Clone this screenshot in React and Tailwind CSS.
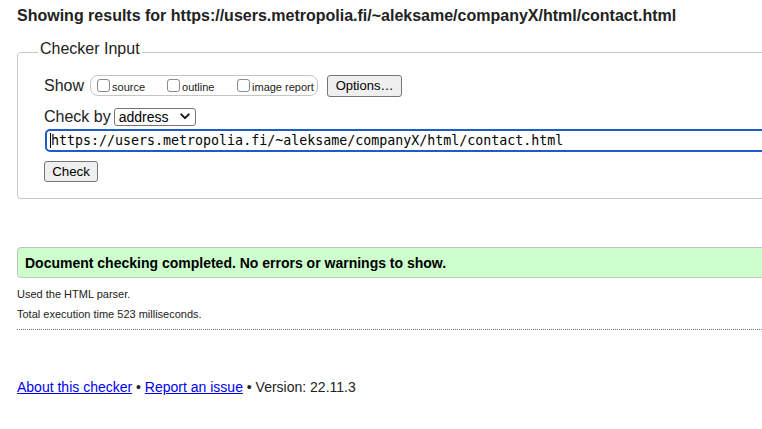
import React from 'react';

const Checkbox = ({ label }) => (
  <label className="flex items-center">
    <span className="inline-block w-[13px] h-[13px] border border-[#8a8a8a] rounded-[3px] bg-white mr-[2px]" />
    <span className="text-[11px] leading-[13px] mt-[3px]">{label}</span>
  </label>
);

const App = () => {
  return (
    <div className="w-[762px] h-[429px] overflow-hidden bg-white text-[#222] font-['Liberation_Sans',Arial,sans-serif]">
      <div className="w-[800px] pl-[17px]">
        <h2 className="pt-[7px] text-[16px] leading-[18px] font-bold text-[#222]">
          Showing results for https://users.metropolia.fi/~aleksame/companyX/html/contact.html
        </h2>

        <fieldset className="mt-[15px] border border-[#c6c6c6] rounded-[4px] pl-[20px] pb-[15px]">
          <legend className="px-[2px] pb-[6px] text-[16px] leading-[18px] text-[#222]">Checker Input</legend>

          <div className="pl-[6px]">
            <div className="mt-[10px] flex items-center h-[23px]">
              <span className="text-[16px] leading-[18px]">Show</span>
              <div className="ml-[6px] flex items-center h-[21px] w-[228px] border border-[#c4c4c4] rounded-[8px] pl-[6px]">
                <div className="w-[70px]"><Checkbox label="source" /></div>
                <div className="w-[70px]"><Checkbox label="outline" /></div>
                <div><Checkbox label="image report" /></div>
              </div>
              <button className="ml-[9px] h-[22px] w-[75px] bg-[#efefef] border border-[#767676] rounded-[3px] text-[13px] leading-[15px] text-black">
                Options…
              </button>
            </div>

            <div className="mt-[10px] flex items-center h-[19px]">
              <span className="text-[16px] leading-[18px]">Check by</span>
              <div className="ml-[3px] flex items-center justify-between w-[82px] h-[18px] border border-[#767676] rounded-[3px] bg-white pl-[4px] pr-[5px]">
                <span className="text-[14px] leading-[16px] text-black">address</span>
                <svg width="10" height="7" viewBox="0 0 10 7" fill="none">
                  <path d="M1.2 1.3 L5 5.2 L8.8 1.3" stroke="#111" strokeWidth="1.8" strokeLinecap="round" strokeLinejoin="round" />
                </svg>
              </div>
            </div>

            <div className="mt-[3px] ml-[1px] flex items-center h-[23px] border-2 border-[#1a5dc8] rounded-[5px] pl-[3px] bg-white">
              <span className="inline-block w-px h-[15px] bg-black" />
              <span className="font-['DejaVu_Sans_Mono',Menlo,monospace] text-[13.3px] leading-[16px] text-black">
                https://users.metropolia.fi/~aleksame/companyX/html/contact.html
              </span>
            </div>

            <button className="mt-[9px] h-[21px] w-[54px] bg-[#efefef] border border-[#767676] rounded-[3px] text-[13.3px] leading-[15px] text-black">
              Check
            </button>
          </div>
        </fieldset>

        <div className="mt-[48px] h-[31px] flex items-center bg-[#ccffcc] border border-[#c2c2c2] rounded-[4px] pl-[7px]">
          <span className="text-[14px] leading-[16px] font-bold text-black">
            Document checking completed. No errors or warnings to show.
          </span>
        </div>

        <p className="mt-[10px] text-[11px] leading-[13px] text-[#222]">Used the HTML parser.</p>
        <p className="mt-[7px] text-[11px] leading-[13px] text-[#222]">Total execution time 523 milliseconds.</p>

        <div className="mt-[8px] border-t border-dotted border-[#777]" />

        <p className="mt-[49px] text-[14px] leading-[16px] text-[#222]">
          <a href="#" className="text-[#0000ee] underline">About this checker</a>
          {' • '}
          <a href="#" className="text-[#0000ee] underline">Report an issue</a>
          {' • Version: 22.11.3'}
        </p>
      </div>
    </div>
  );
};

export default App;
